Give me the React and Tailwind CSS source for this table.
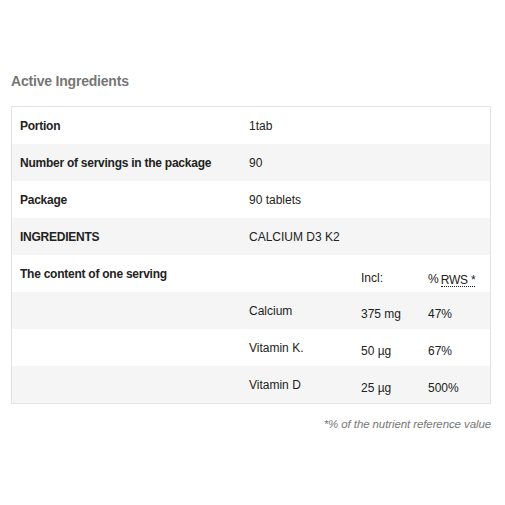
import React from "react"

const basic = [
  { label: "Portion", value: "1tab" },
  { label: "Number of servings in the package", value: "90" },
  { label: "Package", value: "90 tablets" },
  { label: "INGREDIENTS", value: "CALCIUM D3 K2" },
]

const nutrients = [
  { name: "Calcium", amount: "375 mg", rws: "47%" },
  { name: "Vitamin K.", amount: "50 µg", rws: "67%" },
  { name: "Vitamin D", amount: "25 µg", rws: "500%" },
]

function App() {
  return (
    <div className="w-[505px] h-[505px] bg-white font-['Liberation_Sans',Arial,sans-serif] text-[12px] text-[#222]">
      <div className="pt-[72px] px-[11px]">
        <h2 className="text-[14px] font-bold text-[#777] leading-[18px] mb-[16px] tracking-[-0.2px]">
          Active Ingredients
        </h2>

        <div className="w-[480px] border border-[#e3e3e3]">
          {basic.map((row, i) => (
            <div
              key={i}
              className={`flex items-center h-[37px] pl-[8px] ${i % 2 === 1 ? "bg-[#f5f5f5]" : "bg-white"}`}
            >
              <div className="w-[229px] font-bold tracking-[-0.25px] pt-[1px]">{row.label}</div>
              <div className="pt-[1px]">{row.value}</div>
            </div>
          ))}

          {/* serving header */}
          <div className="flex items-center h-[37px] pl-[8px] bg-white">
            <div className="w-[341px] font-bold tracking-[-0.25px]">The content of one serving</div>
            <div className="w-[67px] pt-[8px]">Incl:</div>
            <div className="pt-[8px] flex items-end">
              <span className="mr-[2px] translate-y-[1px]">%</span>
              <abbr className="no-underline border-b border-dotted border-[#222] leading-[12px] tracking-[-0.2px]">RWS *</abbr>
            </div>
          </div>

          {nutrients.map((n, i) => (
            <div
              key={i}
              className={`flex items-center h-[37px] pl-[8px] ${i % 2 === 0 ? "bg-[#f5f5f5]" : "bg-white"}`}
            >
              <div className="w-[229px]"></div>
              <div className="w-[112px] pt-[1px]">{n.name}</div>
              <div className="w-[67px] pt-[7px]">{n.amount}</div>
              <div className="pt-[7px]">{n.rws}</div>
            </div>
          ))}
        </div>

        <p className="w-[480px] text-right italic text-[#777] mt-[12px] text-[11.5px] tracking-[-0.1px]">
          *% of the nutrient reference value
        </p>
      </div>
    </div>
  )
}

export default App
